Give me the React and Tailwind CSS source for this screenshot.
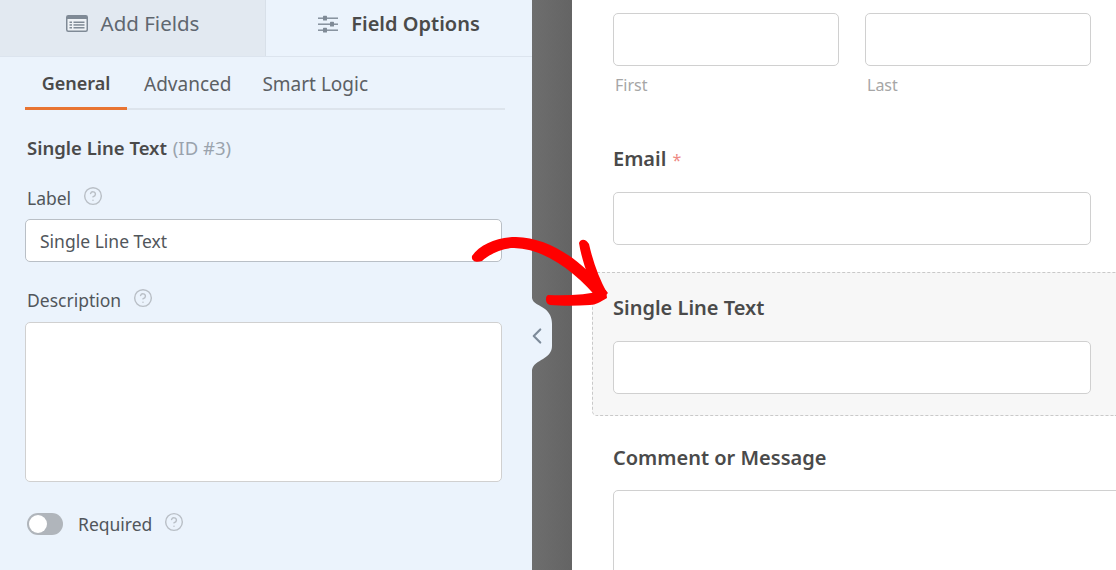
import { CircleHelp, ChevronLeft } from "lucide-react";

function Help({ className }) {
  return <CircleHelp className={`w-[20px] h-[20px] text-[#b9bfc6] ${className || ""}`} strokeWidth={1.7} />;
}

function TableIcon() {
  return (
    <svg width="22" height="17" viewBox="0 0 22 17" className="text-[#7f8a96]">
      <rect x="0.75" y="0.75" width="20.5" height="15.5" rx="1.5" fill="#eef2f6" stroke="currentColor" strokeWidth="1.5" />
      <rect x="1" y="1" width="20" height="3" fill="currentColor" />
      <g fill="currentColor">
        <rect x="3.5" y="6.5" width="2.5" height="1.5" />
        <rect x="3.5" y="9.2" width="2.5" height="1.5" />
        <rect x="3.5" y="12" width="2.5" height="1.5" />
        <rect x="7.5" y="6.5" width="11" height="1.5" />
        <rect x="7.5" y="9.2" width="11" height="1.5" />
        <rect x="7.5" y="12" width="11" height="1.5" />
      </g>
    </svg>
  );
}

function SlidersIcon() {
  return (
    <svg width="20" height="18" viewBox="0 0 20 18" fill="#7f8a96">
      <rect x="0" y="2.5" width="20" height="1.4" />
      <rect x="0" y="8.5" width="20" height="1.4" />
      <rect x="0" y="14.5" width="20" height="1.4" />
      <rect x="5" y="0.8" width="4" height="4.8" rx="0.6" />
      <rect x="12" y="6.8" width="4" height="4.8" rx="0.6" />
      <rect x="5" y="12.8" width="4" height="4.8" rx="0.6" />
    </svg>
  );
}

function Box({ className }) {
  return <div className={`bg-white border border-[#d0d0d0] rounded-[5px] ${className || ""}`} />;
}

export default function App() {
  return (
    <div className="relative flex w-[1116px] h-[570px] overflow-hidden bg-white text-[#4a4a4a] font-['Noto_Sans',sans-serif]">
      {/* left panel */}
      <div className="w-[532px] h-full shrink-0 bg-[#ebf3fc]">
        <div className="flex h-[57px] border-b border-[#dce4ee]">
          <div className="w-[266px] flex items-center justify-center gap-[13px] pb-[10px] bg-[#e2e9f1] border-r border-[#d8e0e9] text-[20.5px] text-[#5f6770]">
            <TableIcon />
            <span>Add Fields</span>
          </div>
          <div className="flex-1 flex items-center justify-center gap-[13px] pb-[8px] text-[20px] font-semibold text-[#4a4a4a]">
            <SlidersIcon />
            <span>Field Options</span>
          </div>
        </div>

        <div className="px-[25px] pr-[27px]">
          <div className="flex h-[53px] border-b-2 border-[#dde4ec] text-[19px] text-[#5c6064]">
            <div className="w-[102px] h-[53px] border-b-[3px] border-[#e87432] flex items-center justify-center text-[18px] font-semibold text-[#4a4a4a] pt-[3px]">General</div>
            <div className="ml-[17px] flex items-center pt-[3px]">Advanced</div>
            <div className="ml-[31px] flex items-center pt-[3px]">Smart Logic</div>
          </div>

          <div className="mt-[25px] pl-[2px] text-[18.5px] leading-[26px] font-semibold text-[#4a4a4a]">
            Single Line Text <span className="font-normal text-[#9aa3ad] ml-[1px]">(ID #3)</span>
          </div>

          <div className="mt-[24px] flex items-center h-[26px] pl-[2px] text-[17.5px] text-[#51565b]">
            Label
            <Help className="ml-[12px] -mt-[4px]" />
          </div>
          <div className="mt-[8px] w-[477px] h-[43px] bg-white border border-[#b9bfc6] rounded-[5px] flex items-center px-[14px] pt-[2px] text-[17.5px] text-[#51565b]">
            Single Line Text
          </div>

          <div className="mt-[25px] flex items-center h-[26px] pl-[2px] text-[17.5px] text-[#51565b]">
            Description
            <Help className="ml-[12px] -mt-[4px]" />
          </div>
          <Box className="mt-[9px] w-[477px] h-[160px] border-[#b9bfc6]" />

          <div className="mt-[29px] flex items-center h-[26px] pl-[2px] text-[17.5px] text-[#51565b]">
            <div className="w-[36px] h-[22px] rounded-full bg-[#b0b5bb] flex items-center pl-[2px] mr-[15px]">
              <div className="w-[18px] h-[18px] rounded-full bg-white" />
            </div>
            Required
            <Help className="ml-[12px] -mt-[4px]" />
          </div>
        </div>
      </div>

      {/* divider */}
      <div className="w-[40px] h-full shrink-0 bg-gradient-to-r from-[#6e6e6e] to-[#646464]" />

      {/* form preview */}
      <div className="flex-1 min-w-0">
        <div className="pl-[41px] pt-[13px]">
          <div className="flex gap-[26px]">
            <div className="w-[226px]">
              <Box className="h-[53px]" />
              <div className="mt-[7px] pl-[2px] text-[16px] leading-[24px] text-[#a6a6a6]">First</div>
            </div>
            <div className="w-[226px]">
              <Box className="h-[53px]" />
              <div className="mt-[7px] pl-[2px] text-[16px] leading-[24px] text-[#a6a6a6]">Last</div>
            </div>
          </div>
          <div className="mt-[48px] text-[20px] leading-[28px] font-semibold">
            Email <span className="font-normal text-[16px] text-[#ee8a84] ml-[1px]">*</span>
          </div>
          <Box className="mt-[18px] w-[478px] h-[53px]" />
        </div>

        <div className="ml-[20px] mt-[27px] h-[144px] pl-[20px] pt-[21px] bg-[#f7f7f7] border border-r-0 border-dashed border-[#c9c9c9] rounded-l-[5px]">
          <div className="text-[20px] leading-[28px] font-semibold">Single Line Text</div>
          <Box className="mt-[19px] w-[478px] h-[53px]" />
        </div>

        <div className="pl-[41px] pt-[28px]">
          <div className="text-[20px] leading-[28px] font-semibold">Comment or Message</div>
          <Box className="mt-[18px] w-[520px] h-[120px]" />
        </div>
      </div>

      {/* collapse tab */}
      <svg className="absolute left-[532px] top-[290px]" width="24" height="90" viewBox="0 0 24 90">
        <path d="M0 0 L0 8 C1 14 8 15 13 19 C18 23 20 28 20 34 L20 56 C20 62 16 66 11 69 C6 72 1 74 0 80 L0 90 Z" fill="#ebf3fc" />
      </svg>
      <ChevronLeft className="absolute left-[524px] top-[323px] w-[26px] h-[26px] text-[#7d8b9a]" strokeWidth={2} />

      {/* red arrow */}
      <svg className="absolute left-0 top-0 pointer-events-none" width="1116" height="570" viewBox="0 0 1116 570">
        <g fill="#ff0000">
          <path d="M472 256 C480 244 498 237 516 237 C550 238 582 260 608 293 L600 301 C578 275 548 249 514 248 C502 248 490 254 482 261 C476 263 471 261 472 256 Z" />
          <path d="M579 243 C581 238 586 239 589 244 C593 262 599 278 607 293 L598 299 C590 282 582 262 579 243 Z" />
          <path d="M548 295 C566 296 586 295 606 290 L607 298 C600 302 596 305 590 305 C576 306 562 306 550 305 C545 304 545 296 548 295 Z" />
        </g>
      </svg>
    </div>
  );
}
